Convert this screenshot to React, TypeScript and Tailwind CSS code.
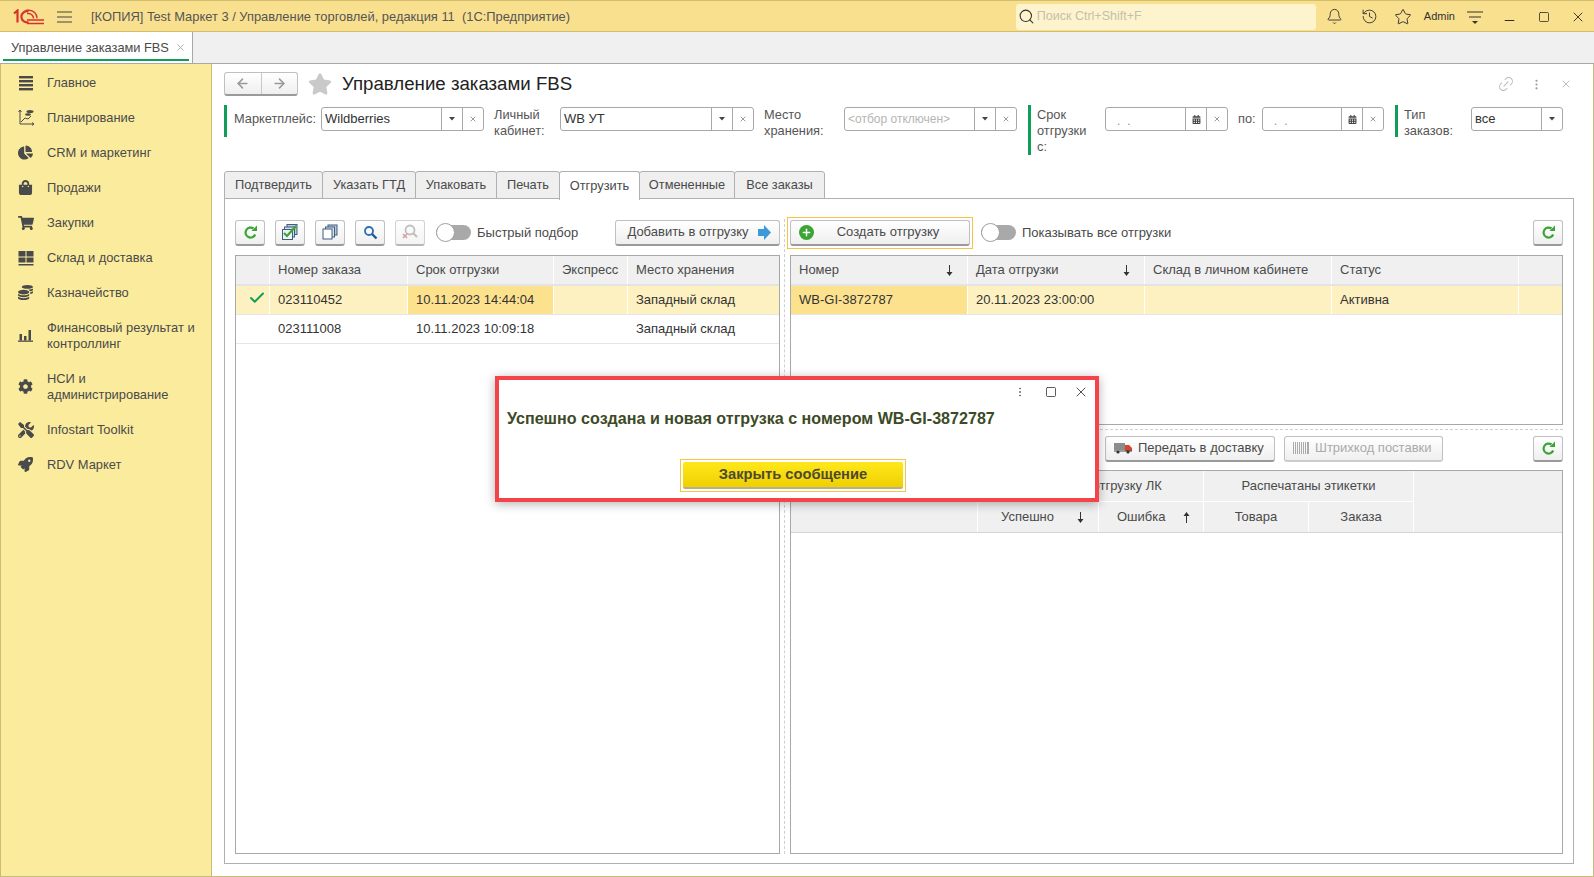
import React from "react";
import { Bell, History, Star, Minus, Square, X, Search, Link2, MoreVertical, Check, ArrowLeft, ArrowRight, Plus } from "lucide-react";
import { FaChartPie, FaShoppingBag, FaShoppingCart, FaCog, FaTools, FaRocket, FaCoins, FaStar, FaCalendarAlt } from "react-icons/fa";

const Ic = ({ children }: { children: React.ReactNode }) => (
  <span className="w-[49px] shrink-0 flex items-center justify-center text-[#4a4a4a]">{children}</span>
);

const BarsIcon = () => (
  <svg width="16" height="16" viewBox="0 0 16 16" fill="#4a4a4a"><rect x="1" y="1" width="14" height="2.4" /><rect x="1" y="5" width="14" height="2.4" /><rect x="1" y="9" width="14" height="2.4" /><rect x="1" y="13" width="14" height="2.4" /></svg>
);
const PlanIcon = () => (
  <svg width="18" height="18" viewBox="0 0 18 18" fill="none" stroke="#4a4a4a" strokeWidth="1"><path d="M3 1v14h14M1.500 3L3 1l1.500 2M15 13.500l2 1.500-2 1.500" /><path d="M4 13l4-4 3 1 3-3" /><ellipse cx="13" cy="2.500" rx="3.500" ry="1.500" fill="#4a4a4a" stroke="none" /><ellipse cx="11" cy="5.500" rx="3" ry="1.300" fill="#4a4a4a" stroke="none" /></svg>
);
const GridIcon = () => (
  <svg width="16" height="16" viewBox="0 0 16 16" fill="#4a4a4a"><rect x="0.500" y="1" width="7" height="5.500" /><rect x="8.500" y="1" width="7" height="5.500" /><rect x="0.500" y="7.500" width="7" height="5" /><rect x="8.500" y="7.500" width="7" height="5" /><rect x="0.500" y="14" width="15" height="1.500" /></svg>
);
const ChartIcon = () => (
  <svg width="15" height="13" viewBox="0 0 15 13" fill="#4a4a4a"><rect x="1.500" y="5" width="2.500" height="6.500" /><rect x="6" y="7" width="2.500" height="4.500" /><rect x="10.500" y="1" width="2.500" height="10.500" /><rect x="0" y="11.500" width="15" height="1.300" /></svg>
);

const sideItems: { icon: React.ReactNode; lines: string[] }[] = [
  { icon: <BarsIcon />, lines: ["Главное"] },
  { icon: <PlanIcon />, lines: ["Планирование"] },
  { icon: <FaChartPie size={15} />, lines: ["CRM и маркетинг"] },
  { icon: <FaShoppingBag size={15} />, lines: ["Продажи"] },
  { icon: <FaShoppingCart size={16} />, lines: ["Закупки"] },
  { icon: <GridIcon />, lines: ["Склад и доставка"] },
  { icon: <FaCoins size={15} />, lines: ["Казначейство"] },
  { icon: <ChartIcon />, lines: ["Финансовый результат и", "контроллинг"] },
  { icon: <FaCog size={15} />, lines: ["НСИ и", "администрирование"] },
  { icon: <FaTools size={16} />, lines: ["Infostart Toolkit"] },
  { icon: <FaRocket size={15} />, lines: ["RDV Маркет"] },
];

const Sidebar = () => (
  <aside className="w-[212px] shrink-0 pt-[1px] bg-[#fbec9d] border-l border-r border-[#c9bb78] text-[12.900px] leading-[16px] text-[#4a4a4a]">
    {sideItems.map((it) => (
      <div key={it.lines[0]} className={it.lines.length > 1 ? "h-[51px] flex items-center" : "h-[35px] flex items-center"}>
        <Ic>{it.icon}</Ic>
        <div className="-ml-[3px]">
          {it.lines.map((l) => <div key={l}>{l}</div>)}
        </div>
      </div>
    ))}
  </aside>
);

const Drop = () => (
  <span className="w-[21px] h-full border-l border-[#a8a8a8] flex items-center justify-center shrink-0">
    <svg width="6" height="3.500" viewBox="0 0 7 4" fill="#444"><path d="M0 0h7L3.500 4z" /></svg>
  </span>
);
const Clear = () => (
  <span className="w-[21px] h-full border-l border-[#a8a8a8] flex items-center justify-center shrink-0">
    <X size={8} strokeWidth={2} color="#666" />
  </span>
);
const Cal = () => (
  <span className="w-[21px] h-full border-l border-[#a8a8a8] flex items-center justify-center shrink-0">
    <FaCalendarAlt size={9} color="#444" />
  </span>
);

const Field = ({ w, children, value, ph }: { w: string; children: React.ReactNode; value?: string; ph?: string }) => (
  <div className={`${w} h-[24px] shrink-0 border border-[#a8a8a8] rounded-[3px] bg-white flex items-center`}>
    <div className="flex-1 pl-[3px] whitespace-nowrap overflow-hidden text-[13px] text-[#333]">
      {value}
      {ph && <span className="text-[#b5b5b5] text-[12px]">{ph}</span>}
    </div>
    {children}
  </div>
);

const DateField = ({ w }: { w: string }) => (
  <Field w={w} value="">
    <Cal />
    <Clear />
  </Field>
);

const DateDots = () => (
  <span className="absolute left-[12px] top-[6px] text-[12px] text-[#c58a3a] tracking-[7px]">..</span>
);

const Filters = () => (
  <div className="flex items-start h-[56px] mt-[8px] text-[12.800px] leading-[16px] text-[#555]">
    <div className="w-[3px] h-[32px] bg-[#0f9d58] shrink-0 -mt-[2px]" />
    <div className="ml-[7px] w-[87px] pt-[4px] shrink-0 whitespace-nowrap">Маркетплейс:</div>
    <Field w="w-[163px]" value="Wildberries"><Drop /><Clear /></Field>
    <div className="ml-[10px] w-[66px] shrink-0">Личный<br />кабинет:</div>
    <Field w="w-[194px]" value="WB УТ"><Drop /><Clear /></Field>
    <div className="ml-[10px] w-[80px] shrink-0">Место<br />хранения:</div>
    <Field w="w-[173px]" ph="<отбор отключен>"><Drop /><Clear /></Field>
    <div className="ml-[11px] w-[3px] h-[50px] bg-[#0f9d58] shrink-0 -mt-[2px]" />
    <div className="ml-[6px] w-[68px] shrink-0">Срок<br />отгрузки<br />с:</div>
    <div className="relative"><DateField w="w-[123px]" /><DateDots /></div>
    <div className="ml-[10px] w-[24px] pt-[4px] shrink-0">по:</div>
    <div className="relative"><DateField w="w-[122px]" /><DateDots /></div>
    <div className="ml-[11px] w-[3px] h-[32px] bg-[#0f9d58] shrink-0 -mt-[2px]" />
    <div className="ml-[6px] w-[67px] shrink-0">Тип<br />заказов:</div>
    <Field w="w-[92px]" value="все"><Drop /></Field>
  </div>
);

const tabs: [string, string][] = [
  ["Подтвердить", "w-[99px]"],
  ["Указать ГТД", "w-[94px]"],
  ["Упаковать", "w-[82px]"],
  ["Печать", "w-[64px]"],
  ["Отгрузить", "w-[81px]"],
  ["Отмененные", "w-[96px]"],
  ["Все заказы", "w-[91px]"],
];

const Tabs = () => (
  <div className="flex h-[28px] mt-[8px] relative z-10 text-[12.800px] text-[#4a4a4a]">
    {tabs.map(([t, w]) => (
      <div
        key={t}
        className={
          t === "Отгрузить"
            ? `${w} h-[29px] bg-white border border-b-0 border-[#b0b0b0] rounded-t-[3px] -ml-[1px] flex items-center justify-center`
            : `${w} h-[28px] bg-[#efefef] border border-[#b0b0b0] rounded-t-[3px] -ml-[1px] first:ml-0 flex items-center justify-center`
        }
      >
        {t}
      </div>
    ))}
  </div>
);

const btn = "h-[26px] border border-[#c0c0c0] border-b-[#9a9a9a] border-b-2 rounded-[3px] bg-gradient-to-b from-white to-[#efefef] flex items-center justify-center shrink-0";

const IconBtn = ({ children, disabled }: { children: React.ReactNode; disabled?: boolean }) => (
  <div className={`${btn} w-[30px] ${disabled ? "opacity-70" : ""}`}>{children}</div>
);

const Refresh = () => (
  <svg width="15" height="15" viewBox="0 0 15 15" fill="none">
    <path d="M12.200 9.500A5 5 0 1 1 10.500 3.500" stroke="#3aa535" strokeWidth="2.200" />
    <path d="M8.500 6h5.500V0.500z" fill="#3aa535" />
  </svg>
);

const Toggle = () => (
  <div className="w-[35px] h-[19px] relative shrink-0 flex items-center">
    <div className="w-full h-[15px] rounded-full bg-[#a9a9a9]" />
    <div className="absolute left-0 top-0 w-[19px] h-[19px] rounded-full bg-white border border-[#a0a0a0]" />
  </div>
);

const StackCheck = () => (
  <svg width="18" height="18" viewBox="0 0 18 18" fill="none">
    <rect x="6" y="1.500" width="10" height="10" fill="#b8c9d8" stroke="#3f5f7f" />
    <rect x="3.500" y="4" width="10" height="10" fill="#d5e0ea" stroke="#3f5f7f" />
    <rect x="1.500" y="6.500" width="10" height="10" fill="#eef3f7" stroke="#3f5f7f" />
    <path d="M3 10l3 3 9-10" stroke="#3aa535" strokeWidth="2.200" />
  </svg>
);
const StackIcon = () => (
  <svg width="16" height="16" viewBox="0 0 16 16" fill="none" stroke="#3f5f7f">
    <rect x="6" y="1" width="9" height="10" fill="#b8c9d8" />
    <rect x="3.500" y="3" width="9" height="10" fill="#d5e0ea" />
    <rect x="1" y="5" width="9" height="10" fill="#fff" />
  </svg>
);
const SearchBlue = () => (
  <svg width="15" height="15" viewBox="0 0 15 15" fill="none">
    <circle cx="6" cy="6" r="4" stroke="#2a6fb0" strokeWidth="1.800" />
    <path d="M9 9l4.500 4.500" stroke="#1f5a94" strokeWidth="2.400" />
  </svg>
);
const SearchX = () => (
  <svg width="18" height="18" viewBox="0 0 18 18" fill="none">
    <circle cx="9" cy="7" r="4.500" stroke="#a5a5a5" strokeWidth="1.800" />
    <path d="M12 10l4 4" stroke="#a5a5a5" strokeWidth="2.200" />
    <path d="M2 11l4 4M6 11l-4 4" stroke="#c47a7a" strokeWidth="1.600" />
  </svg>
);
const BlockArrow = () => (
  <svg width="13" height="15" viewBox="0 0 13 15" fill="#3b9ad8"><path d="M0 4h6V0l7 7.500-7 7.500v-4H0z" /></svg>
);
const Truck = () => (
  <svg width="18" height="12" viewBox="0 0 18 12">
    <rect x="0" y="1" width="11" height="7" fill="#8c8c8c" />
    <path d="M11 3h4l3 3v3h-7z" fill="#d8452f" />
    <rect x="0" y="8.500" width="18" height="1" fill="#444" />
    <circle cx="4" cy="10" r="1.600" fill="#333" />
    <circle cx="14" cy="10" r="1.600" fill="#333" />
  </svg>
);

const Cell = ({ w, className, children }: { w: string; className?: string; children?: React.ReactNode }) => (
  <div className={`${w} shrink-0 h-full flex items-center pl-[8px] border-r border-white ${className ?? ""}`}>{children}</div>
);

const SortDown = () => (
  <svg width="7" height="11" viewBox="0 0 7 11" fill="#333"><rect x="3" y="0" width="1" height="8" /><path d="M0.500 7h6L3.500 11z" /></svg>
);
const SortUp = () => (
  <svg width="7" height="11" viewBox="0 0 7 11" fill="#333"><rect x="3" y="3" width="1" height="8" /><path d="M0.500 4h6L3.500 0z" /></svg>
);

const LeftTable = () => (
  <div className="flex-1 border border-[#a8a8a8] bg-white text-[13px] text-[#4a4a4a] mt-[9px]">
    <div className="h-[30px] flex bg-[#f0f0f0] border-b-[2px] border-[#e4e4e4]">
      <Cell w="w-[34px]" />
      <Cell w="w-[138px]">Номер заказа</Cell>
      <Cell w="w-[146px]">Срок отгрузки</Cell>
      <Cell w="w-[74px]">Экспресс</Cell>
      <Cell w="flex-1" className="border-r-0">Место хранения</Cell>
    </div>
    <div className="h-[29px] flex bg-[#fdf1c1] border-b border-[#e6e6e6] text-[#333]">
      <Cell w="w-[34px]" className="justify-center pl-0"><Check size={18} strokeWidth={2.600} color="#0f9d58" className="-mt-[5px]" /></Cell>
      <Cell w="w-[138px]">023110452</Cell>
      <Cell w="w-[146px]" className="bg-[#fde28e]">10.11.2023 14:44:04</Cell>
      <Cell w="w-[74px]" />
      <Cell w="flex-1" className="border-r-0">Западный склад</Cell>
    </div>
    <div className="h-[29px] flex border-b border-[#e6e6e6] text-[#333]">
      <Cell w="w-[34px]" />
      <Cell w="w-[138px]">023111008</Cell>
      <Cell w="w-[146px]">10.11.2023 10:09:18</Cell>
      <Cell w="w-[74px]" />
      <Cell w="flex-1" className="border-r-0">Западный склад</Cell>
    </div>
  </div>
);

const RightTable = () => (
  <div className="h-[170px] shrink-0 border border-[#a8a8a8] bg-white text-[13px] text-[#4a4a4a] mt-[9px]">
    <div className="h-[30px] flex bg-[#f0f0f0] border-b-[2px] border-[#e4e4e4]">
      <Cell w="w-[177px]" className="justify-between pr-[14px]">Номер<SortDown /></Cell>
      <Cell w="w-[177px]" className="justify-between pr-[14px]">Дата отгрузки<SortDown /></Cell>
      <Cell w="w-[187px]">Склад в личном кабинете</Cell>
      <Cell w="w-[187px]">Статус</Cell>
      <Cell w="flex-1" className="border-r-0" />
    </div>
    <div className="h-[29px] flex bg-[#fdf1c1] border-b border-[#e6e6e6] text-[#333]">
      <Cell w="w-[177px]" className="bg-[#fde28e]">WB-GI-3872787</Cell>
      <Cell w="w-[177px]">20.11.2023 23:00:00</Cell>
      <Cell w="w-[187px]" />
      <Cell w="w-[187px]">Активна</Cell>
      <Cell w="flex-1" className="border-r-0" />
    </div>
  </div>
);

const HC = ({ w, className, children }: { w: string; className?: string; children?: React.ReactNode }) => (
  <div className={`${w} h-full shrink-0 flex items-center justify-center border-r border-white ${className ?? ""}`}>{children}</div>
);

const BottomTable = () => (
  <div className="flex-1 border border-[#a8a8a8] bg-white text-[13px] text-[#4a4a4a] mt-[8px]">
    <div className="h-[62px] flex bg-[#f0f0f0] border-b-[1px] border-[#d4d4d4]">
      <HC w="w-[187px]" />
      <div className="w-[226px] shrink-0 flex flex-col">
        <HC w="w-full" className="!h-[31px] border-b">Добавлен в отгрузку ЛК</HC>
        <div className="flex h-[31px]">
          <HC w="w-[121px]" className="!justify-start pl-[23px] gap-[23px]">Успешно<SortDown /></HC>
          <HC w="w-[105px]" className="!justify-start pl-[18px] gap-[18px]">Ошибка<SortUp /></HC>
        </div>
      </div>
      <div className="w-[210px] shrink-0 flex flex-col">
        <HC w="w-full" className="!h-[31px] border-b">Распечатаны этикетки</HC>
        <div className="flex h-[31px]">
          <HC w="w-[105px]">Товара</HC>
          <HC w="w-[105px]">Заказа</HC>
        </div>
      </div>
      <div className="flex-1" />
    </div>
  </div>
);

const Barcode = () => (
  <svg width="16" height="12" viewBox="0 0 16 12" fill="#aaa"><rect x="0" width="1" height="12" /><rect x="2" width="1" height="12" /><rect x="4" width="1" height="12" /><rect x="6" width="1" height="12" /><rect x="8" width="1" height="12" /><rect x="10" width="1" height="12" /><rect x="12" width="1" height="12" /><rect x="14" width="2" height="12" /></svg>
);

const Panel = () => (
  <div className="flex-1 border border-[#b0b0b0] -mt-px bg-white px-[10px] pt-[20px] pb-[9px] flex min-h-0 text-[13px] text-[#4a4a4a]">
    <div className="w-[545px] shrink-0 flex flex-col">
      <div className="flex items-center gap-[10px] h-[27px] shrink-0">
        <IconBtn><Refresh /></IconBtn>
        <IconBtn><StackCheck /></IconBtn>
        <IconBtn><StackIcon /></IconBtn>
        <IconBtn><SearchBlue /></IconBtn>
        <IconBtn disabled><SearchX /></IconBtn>
        <div className="ml-[1px]"><Toggle /></div>
        <span className="-ml-[4px] w-[129px] whitespace-nowrap">Быстрый подбор</span>
        <div className={`${btn} w-[165px] gap-[9px] pl-[3px]`}>
          Добавить в отгрузку
          <BlockArrow />
        </div>
      </div>
      <LeftTable />
    </div>
    <div className="mx-[4px] w-[2px] shrink-0 border-l border-dashed border-[#d0d0d0]" />
    <div className="flex-1 flex flex-col min-w-0">
      <div className="flex items-center h-[27px] shrink-0">
        <div className="-ml-[3px] p-[2px] border border-[#f5c542] shrink-0">
          <div className={`${btn} w-[180px] relative pl-[16px]`}>
            <span className="absolute left-[8px] top-[4px] w-[15px] h-[15px] rounded-full bg-[#3aa535] flex items-center justify-center"><Plus size={11} strokeWidth={3} color="#fff" /></span>
            Создать отгрузку
          </div>
        </div>
        <div className="ml-[8px]"><Toggle /></div>
        <span className="ml-[6px]">Показывать все отгрузки</span>
        <div className="ml-auto"><IconBtn><Refresh /></IconBtn></div>
      </div>
      <RightTable />
      <div className="h-px mt-[4px] shrink-0 border-t border-dashed border-[#d0d0d0]" />
      <div className="h-[27px] mt-[5px] flex items-center shrink-0">
        <div className={`${btn} w-[170px] ml-[315px] !justify-start pl-[8px] gap-[6px]`}>
          <Truck />
          Передать в доставку
        </div>
        <div className={`${btn} w-[159px] ml-[9px] !justify-start pl-[8px] gap-[6px] text-[#aaa] border-b-[#ccc]`}>
          <Barcode />
          Штрихкод поставки
        </div>
        <div className="ml-auto"><IconBtn><Refresh /></IconBtn></div>
      </div>
      <BottomTable />
    </div>
  </div>
);

const Dialog = () => (
  <div className="absolute left-[495px] top-[376px] w-[604px] h-[126px] bg-white border-[4px] border-[#f5434a] shadow-[0_2px_10px_rgba(0,0,0,0.3)]">
    <div className="flex justify-end items-center h-[20px] pr-[6px] pt-[4px] text-[#333]">
      <MoreVertical size={12} color="#666" />
      <Square size={12} strokeWidth={1.600} className="ml-[19px]" />
      <X size={16} strokeWidth={1.300} className="ml-[16px]" />
    </div>
    <div className="pl-[8px] pt-[9px] text-[16.100px] font-bold text-[#3c4a26] leading-[18px] whitespace-nowrap">
      Успешно создана и новая отгрузка с номером WB-GI-3872787
    </div>
    <div className="ml-[181px] mt-[32px] w-[226px] h-[33px] border border-[#f5c542] p-[2px]">
      <div className="h-[27px] rounded-[2px] bg-gradient-to-b from-[#ffe81a] to-[#efd000] border-b-2 border-[#b9b08a] flex items-center justify-center font-bold text-[14.700px] text-[#4d4a30]">
        Закрыть сообщение
      </div>
    </div>
  </div>
);

const TitleBar = () => (
  <header className="h-[32px] shrink-0 pt-[1px] bg-[#f9e08f] border-t border-b border-[#d2bd6c] flex items-center text-[#555]">
    <svg width="31" height="16" viewBox="0 0 31 16" className="ml-[13px]" fill="none" stroke="#d8322e" strokeWidth="2.200">
      <path d="M1 4.500l3.500-3v12" />
      <path d="M15.500 2.500a5.500 5.500 0 1 0 0 10.500" />
      <path d="M13 1.200h3a8 8 0 0 1 8 8" strokeWidth="1.400" />
      <path d="M14 4.500h1.500a5 5 0 0 1 5 5" strokeWidth="1.400" />
      <path d="M14 14.500h17M14 11h17" strokeWidth="1.400" />
    </svg>
    <svg width="15" height="12" viewBox="0 0 15 12" className="ml-[13px]" stroke="#444" strokeWidth="1.100"><path d="M0 1h15M0 6h15M0 11h15" /></svg>
    <span className="ml-[19px] text-[12.900px] whitespace-nowrap">[КОПИЯ] Test Маркет 3 / Управление торговлей, редакция 11&nbsp;&nbsp;(1С:Предприятие)</span>
    <div className="ml-auto w-[300px] h-[26px] rounded-[3px] bg-[#fdf4cd] flex items-center pl-[2px] text-[12.500px] text-[#c4c0aa] gap-[2px]">
      <Search size={17} strokeWidth={1.500} color="#333" />
      Поиск Ctrl+Shift+F
    </div>
    <Bell size={17} strokeWidth={1.300} className="ml-[10px]" color="#333" />
    <History size={17} strokeWidth={1.300} className="ml-[18px]" color="#333" />
    <Star size={18} strokeWidth={1.300} className="ml-[16px]" color="#333" />
    <span className="ml-[12px] text-[11px] text-[#333]">Admin</span>
    <svg width="16" height="14" viewBox="0 0 16 14" className="ml-[12px]" stroke="#333" strokeWidth="1.100" fill="#333"><path d="M0 2h16M2 7h12" /><path d="M5 11h6l-3 3z" stroke="none" /></svg>
    <Minus size={15} strokeWidth={1.500} className="ml-[19px] mt-[8px]" color="#222" />
    <Square size={12} strokeWidth={1.500} className="ml-[21px]" color="#222" />
    <X size={16} strokeWidth={1.300} className="ml-[20px] mr-[8px]" color="#222" />
  </header>
);

const TabBar = () => (
  <div className="h-[32px] shrink-0 bg-[#f0f0f0] border-b border-[#a8a8a8] flex">
    <div className="w-[193px] h-full bg-white border-r border-[#a8a8a8] relative flex items-center pl-[11px] gap-[6px] text-[12.800px] text-[#4a4a4a]">
      <span className="whitespace-nowrap">Управление заказами FBS</span>
      <X size={11} strokeWidth={2} color="#aaa" />
      <div className="absolute left-[3px] right-[3px] bottom-[2px] h-[2px] bg-[#0f9d58]" />
    </div>
  </div>
);

export default function App() {
  return (
    <div className="relative w-[1594px] h-[877px] overflow-hidden bg-white flex flex-col" style={{ fontFamily: '"Liberation Sans", Arial, sans-serif' }}>
      <TitleBar />
      <TabBar />
      <div className="flex-1 flex min-h-0 border-b border-[#c9bb78]">
        <Sidebar />
        <main className="flex-1 min-w-0 pl-[12px] pr-[19px] pb-[12px] flex flex-col border-r border-[#c9bb78]">
          <div className="h-[30px] mt-[5px] flex items-center shrink-0">
            <div className="w-[74px] h-[24px] border border-[#c0c0c0] border-b-[#9a9a9a] border-b-2 rounded-[3px] bg-gradient-to-b from-white to-[#efefef] flex">
              <span className="flex-1 flex items-center justify-center border-r border-[#c8c8c8]"><ArrowLeft size={15} strokeWidth={2.400} color="#999" /></span>
              <span className="flex-1 flex items-center justify-center"><ArrowRight size={15} strokeWidth={2.400} color="#999" /></span>
            </div>
            <FaStar size={24} color="#c9c9c9" className="ml-[10px]" />
            <h1 className="ml-[10px] text-[18.660px] text-[#222]">Управление заказами FBS</h1>
            <div className="ml-auto flex items-center pr-[2px]">
              <Link2 size={18} strokeWidth={1.300} color="#bbb" className="-rotate-45" />
              <MoreVertical size={13} color="#999" className="ml-[15px]" />
              <X size={12} strokeWidth={1.300} color="#999" className="ml-[17px]" />
            </div>
          </div>
          <Filters />
          <Tabs />
          <Panel />
        </main>
      </div>
      <Dialog />
    </div>
  );
}
